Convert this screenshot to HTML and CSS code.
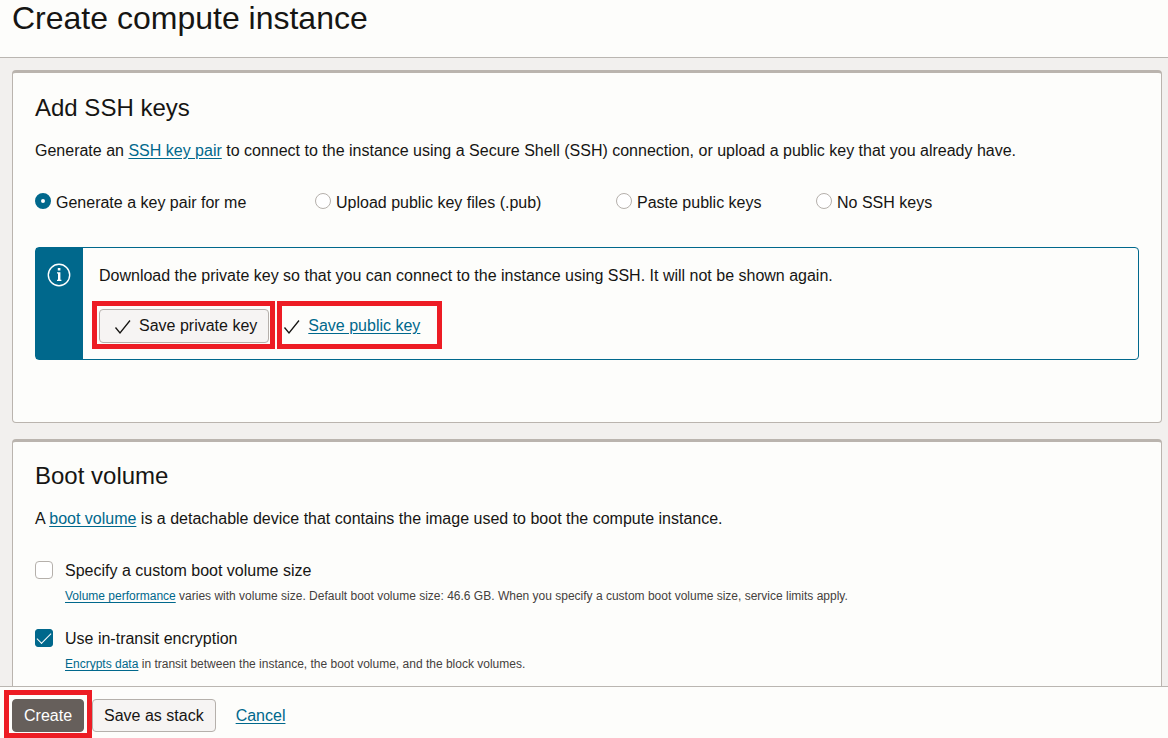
FILE: index.html
```html
<!DOCTYPE html>
<html lang="en">
<head>
<meta charset="utf-8">
<title>Create compute instance</title>
<link rel="stylesheet" href="styles.css">
</head>
<body class="page">
<header class="page-header">
  <h1 class="page-title">Create compute instance</h1>
</header>
<main class="content">
  <section class="card card-ssh">
    <h2 class="card-title">Add SSH keys</h2>
    <p class="card-text">Generate an <a class="link" href="#">SSH key pair</a> to connect to the instance using a Secure Shell (SSH) connection, or upload a public key that you already have.</p>
    <div class="radio-row" role="radiogroup" aria-label="SSH keys">
      <label class="radio-item"><input class="radio" type="radio" name="ssh" checked><span>Generate a key pair for me</span></label>
      <label class="radio-item"><input class="radio" type="radio" name="ssh"><span>Upload public key files (.pub)</span></label>
      <label class="radio-item"><input class="radio" type="radio" name="ssh"><span>Paste public keys</span></label>
      <label class="radio-item"><input class="radio" type="radio" name="ssh"><span>No SSH keys</span></label>
    </div>
    <div class="notice">
      <div class="notice-side">
        <svg class="info-icon" width="24" height="24" viewBox="0 0 24 24" aria-hidden="true">
          <circle cx="12" cy="12" r="10.7" fill="none" stroke="#fff" stroke-width="1.4"/>
          <path d="M10.8 5h2.6v2.6h-2.6zM10 9.2h3.4v7.6h1v1.2H10v-1.2h1v-6.4h-1z" fill="#fff"/>
        </svg>
      </div>
      <div class="notice-body">
        <p class="notice-text">Download the private key so that you can connect to the instance using SSH. It will not be shown again.</p>
        <div class="notice-actions">
          <div class="marked marked-private">
            <button class="btn btn-private" type="button">
              <svg class="check-icon" width="18" height="16" viewBox="0 0 18 16" aria-hidden="true"><path d="M1.5 8.5L6 14L16 1.5" fill="none" stroke="#161513" stroke-width="1.3"/></svg>
              <span>Save private key</span>
            </button>
          </div>
          <div class="marked marked-public">
            <svg class="check-icon" width="18" height="16" viewBox="0 0 18 16" aria-hidden="true"><path d="M1.5 8.5L6 14L16 1.5" fill="none" stroke="#161513" stroke-width="1.3"/></svg>
            <a class="link" href="#">Save public key</a>
          </div>
        </div>
      </div>
    </div>
  </section>
  <section class="card">
    <h2 class="card-title">Boot volume</h2>
    <p class="card-text">A <a class="link" href="#">boot volume</a> is a detachable device that contains the image used to boot the compute instance.</p>
    <div class="options">
      <div class="option">
        <input class="checkbox" type="checkbox" id="custom-size">
        <div class="option-body">
          <label class="option-label" for="custom-size">Specify a custom boot volume size</label>
          <p class="option-hint"><a class="link" href="#">Volume performance</a> varies with volume size. Default boot volume size: 46.6 GB. When you specify a custom boot volume size, service limits apply.</p>
        </div>
      </div>
      <div class="option">
        <input class="checkbox" type="checkbox" id="encryption" checked>
        <div class="option-body">
          <label class="option-label" for="encryption">Use in-transit encryption</label>
          <p class="option-hint"><a class="link" href="#">Encrypts data</a> in transit between the instance, the boot volume, and the block volumes.</p>
        </div>
      </div>
    </div>
  </section>
</main>
<footer class="page-footer">
  <div class="marked marked-create"><button class="btn btn-primary" type="button">Create</button></div>
  <button class="btn" type="button">Save as stack</button>
  <a class="link cancel" href="#">Cancel</a>
</footer>
</body>
</html>
```
FILE: styles.css
```css
* { box-sizing: border-box; }

.page {
  margin: 0;
  height: 100vh;
  display: flex;
  flex-direction: column;
  overflow: hidden;
  background: #f2f0ee;
  color: #161513;
  font: 16px/20px "Liberation Sans", Arial, sans-serif;
}

.page-header {
  flex: none;
  padding: 0 12px 21px;
  background: #fdfdfb;
  border-bottom: 1px solid #bab6b1;
}

.page-title { margin: 0; font-size: 32px; line-height: 36px; font-weight: 400; }

.content {
  flex: 1;
  min-height: 0;
  overflow: hidden;
  display: flex;
  flex-direction: column;
  gap: 16px;
  padding: 12px 6px 0 12px;
}

.card {
  flex: none;
  padding: 20px 22px 40px;
  background: #fdfdfb;
  border: 1px solid #bab4ae;
  border-top-width: 3px;
  border-radius: 4px;
}

.card-ssh { padding: 21px 22px 62px; }
.card-title { margin: 0; font-size: 24px; line-height: 28px; font-weight: 400; }
.card-text { margin: 19px 0 0; }

.link { color: #00688c; text-decoration: underline; text-underline-offset: 2px; }

.radio-row {
  display: grid;
  grid-template-columns: 280px 301px 200px 1fr;
  margin-top: 32px;
}

.radio-item { display: flex; align-items: center; gap: 5px; }

.radio {
  appearance: none;
  flex: none;
  width: 16px;
  height: 16px;
  margin: 0 0 4px;
  border: 1px solid #b5b0ab;
  border-radius: 50%;
  background: #fff;
}

.radio:checked { border: 6px solid #00688c; }

.notice {
  display: flex;
  margin-top: 34px;
  border: 1px solid #00688c;
  border-radius: 4px;
  background: #fdfdfb;
}

.notice-side {
  flex: none;
  width: 47px;
  padding: 15px 0 0 11px;
  background: #00688c;
}

.info-icon { display: block; }
.notice-body { flex: 1; padding: 18px 16px 16px; }
.notice-text { margin: 0; }
.notice-actions { display: flex; gap: 14px; margin-top: 23px; }

.marked { position: relative; display: flex; align-items: center; }

.marked::after {
  content: "";
  position: absolute;
  border: 5px solid #ed1c24;
  pointer-events: none;
}

.marked-private::after { inset: -8px -6px -6px -7px; }
.marked-public { gap: 7px; }
.marked-public::after { inset: -8px -22px -6px -6px; }

.btn {
  display: flex;
  align-items: center;
  height: 33px;
  padding: 1px 11px 0;
  border: 1px solid #b5b0ab;
  border-radius: 4px;
  background: #f6f4f3;
  color: #161513;
  font: inherit;
}

.btn-private { height: 34px; padding: 0 11px 0 14px; gap: 7px; }
.btn-primary { border-color: #665f5b; background: #665f5b; color: #fff; }
.check-icon { flex: none; margin-top: 2px; }

.options { display: flex; flex-direction: column; gap: 24px; margin-top: 32px; }
.option { display: flex; gap: 12px; }

.checkbox {
  appearance: none;
  flex: none;
  width: 18px;
  height: 18px;
  margin: 0;
  border: 1px solid #b5b0ab;
  border-radius: 4px;
  background: #fff;
}

.checkbox:checked {
  display: grid;
  place-items: center;
  border-color: #00688c;
  border-radius: 3px;
  background: #00688c;
}

.checkbox:checked::before {
  content: "";
  width: 13px;
  height: 6px;
  margin-bottom: 4px;
  border: solid #fff;
  border-width: 0 0 1px 1px;
  transform: rotate(-45deg);
}

.option-label { display: block; }
.option-hint { margin: 7px 0 1px; font-size: 12px; line-height: 16px; color: #45413d; }

.page-footer {
  flex: none;
  display: flex;
  align-items: center;
  gap: 8px;
  height: 52px;
  padding: 6px 12px 0;
  background: #fdfdfb;
  border-top: 1px solid #bab6b1;
}

.marked-create::after { inset: -9px -8px -6px; }
.cancel { margin-left: 12px; }
```
